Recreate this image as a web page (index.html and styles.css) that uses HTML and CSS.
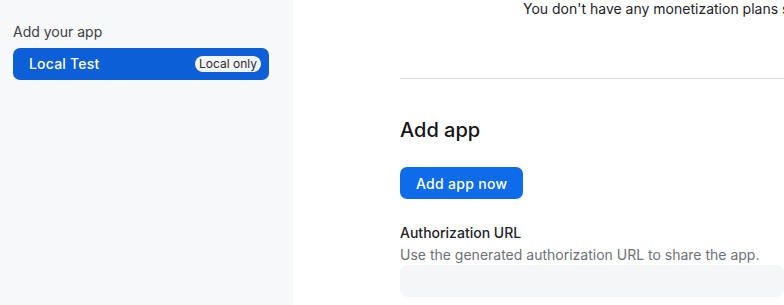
FILE: index.html
```html
<!DOCTYPE html>
<html lang="en">
<head>
  <meta charset="UTF-8">
  <meta name="viewport" content="width=device-width, initial-scale=1.0">
  <title>Add your app</title>
  <link rel="stylesheet" href="styles.css">
</head>
<body>
  <div class="layout">
    <aside class="sidebar">
      <div class="sidebar-title">Add your app</div>
      <div class="app-item">
        <span class="app-name">Local Test</span>
        <span class="badge">Local only</span>
      </div>
    </aside>

    <main class="main">
      <p class="notice">You don't have any monetization plans set up for this app yet.</p>
      <hr class="divider">

      <h2 class="section-title">Add app</h2>
      <button type="button" class="btn-primary">Add app now</button>

      <div class="field">
        <div class="field-label">Authorization URL</div>
        <div class="field-help">Use the generated authorization URL to share the app.</div>
        <div class="field-box"></div>
      </div>
    </main>
  </div>
</body>
</html>
```

FILE: styles.css
```css
html, body {
  height: 100%;
  margin: 0;
  padding: 0;
  overflow: hidden;
}

body {
  font-family: Inter, "Noto Sans", Arial, sans-serif;
  font-size: 14px;
  line-height: 20px;
  color: #222327;
  background: #fff;
}

.layout {
  display: flex;
  height: 100%;
}

.sidebar {
  width: 293px;
  flex-shrink: 0;
  box-sizing: border-box;
  padding: 22px 24px 0 13px;
  background: #f7f8fa;
}

.sidebar-title {
  color: #3b3e44;
  margin-bottom: 6px;
}

.app-item {
  display: flex;
  align-items: center;
  justify-content: space-between;
  height: 32px;
  padding: 0 8px 0 16px;
  background: #0d5fd8;
  border-radius: 7px;
  color: #fff;
  font-weight: 500;
  letter-spacing: 0.2px;
}

.badge {
  height: 16px;
  line-height: 16px;
  padding: 0 4px;
  background: #f3f4f6;
  color: #2b2d31;
  border-radius: 8px;
  font-size: 12px;
  font-weight: 400;
  letter-spacing: 0;
}

.main {
  flex: 1;
  min-width: 0;
  overflow: hidden;
  padding-left: 107px;
}

.notice {
  margin: -1px 0 0 123px;
  white-space: nowrap;
  color: #222327;
}

.divider {
  border: none;
  border-top: 1px solid #dde1e6;
  margin: 59px 0 0;
}

.section-title {
  margin: 37px 0 23px;
  font-size: 20px;
  line-height: 28px;
  font-weight: 500;
  color: #131416;
}

.btn-primary {
  display: block;
  height: 32px;
  padding: 0 16px;
  border: none;
  border-radius: 7px;
  background: #0e6ceb;
  color: #fff;
  font-family: inherit;
  font-size: 14px;
  font-weight: 500;
  letter-spacing: 0.3px;
  cursor: pointer;
}

.field {
  margin-top: 24px;
}

.field-label {
  font-weight: 500;
  color: #222327;
}

.field-help {
  margin-top: 2px;
  color: #6e7077;
  white-space: nowrap;
}

.field-box {
  height: 32px;
  background: #f5f6f8;
  border-radius: 8px;
}
```
